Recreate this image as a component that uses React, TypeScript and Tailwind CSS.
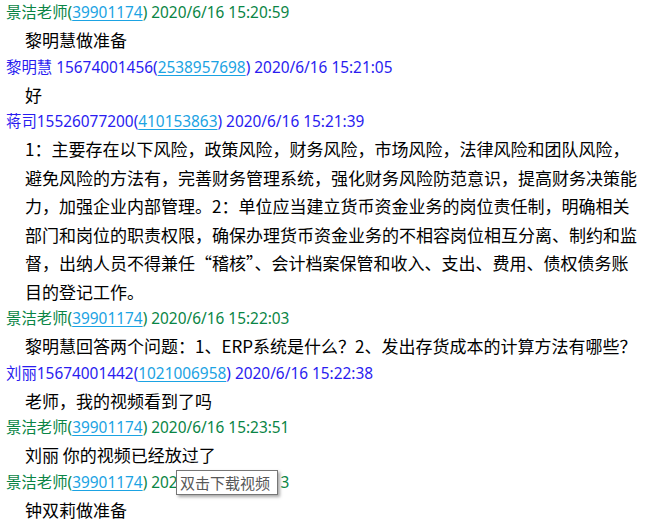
type Msg = {
  name: string
  qq: string
  time: string
  teacher: boolean
  text: string
}

const messages: Msg[] = [
  { name: '景洁老师', qq: '39901174', time: '2020/6/16 15:20:59', teacher: true, text: '黎明慧做准备' },
  { name: '黎明慧 15674001456', qq: '2538957698', time: '2020/6/16 15:21:05', teacher: false, text: '好' },
  {
    name: '蒋司15526077200',
    qq: '410153863',
    time: '2020/6/16 15:21:39',
    teacher: false,
    text: '1：主要存在以下风险，政策风险，财务风险，市场风险，法律风险和团队风险，避免风险的方法有，完善财务管理系统，强化财务风险防范意识，提高财务决策能力，加强企业内部管理。2：单位应当建立货币资金业务的岗位责任制，明确相关部门和岗位的职责权限，确保办理货币资金业务的不相容岗位相互分离、制约和监督，出纳人员不得兼任“稽核”、会计档案保管和收入、支出、费用、债权债务账目的登记工作。',
  },
  { name: '景洁老师', qq: '39901174', time: '2020/6/16 15:22:03', teacher: true, text: '黎明慧回答两个问题：1、ERP系统是什么？2、发出存货成本的计算方法有哪些？' },
  { name: '刘丽15674001442', qq: '1021006958', time: '2020/6/16 15:22:38', teacher: false, text: '老师，我的视频看到了吗' },
  { name: '景洁老师', qq: '39901174', time: '2020/6/16 15:23:51', teacher: true, text: '刘丽 你的视频已经放过了' },
  { name: '景洁老师', qq: '39901174', time: '2020/6/16 15:24:13', teacher: true, text: '钟双莉做准备' },
];

function Header({ m }: { m: Msg }) {
  return (
    <div
      className={`pl-[6px] text-[15.4px] leading-[26px] whitespace-nowrap font-[family-name:'Noto_Sans','Noto_Sans_CJK_SC',sans-serif] ${
        m.teacher ? 'text-[#0a8545]' : 'text-[#2a1cf0]'
      }`}
    >
      {m.name}(<a className="text-[#1ba3e3] underline underline-offset-2">{m.qq}</a>) {m.time}
    </div>
  );
}

export default function App() {
  return (
    <div className="relative w-[657px] h-[529px] overflow-hidden bg-white">
      {messages.map((m, i) => (
        <div key={i}>
          <Header m={m} />
          <div className="pl-[25px] pr-[16px] text-[17px] leading-[28.5px] text-black font-[family-name:'Noto_Sans_CJK_SC',sans-serif]">
            {m.text}
          </div>
        </div>
      ))}
      {/* tooltip over the last header */}
      <div className="absolute left-[176px] top-[470px] h-[25px] w-[102px] border border-[#767676] bg-white pl-[3px] text-[15px] leading-[23px] text-[#575757] shadow-[2px_2px_3px_rgba(0,0,0,0.35)] font-[family-name:'Noto_Sans_CJK_SC',sans-serif]">
        双击下载视频
      </div>
    </div>
  );
}
